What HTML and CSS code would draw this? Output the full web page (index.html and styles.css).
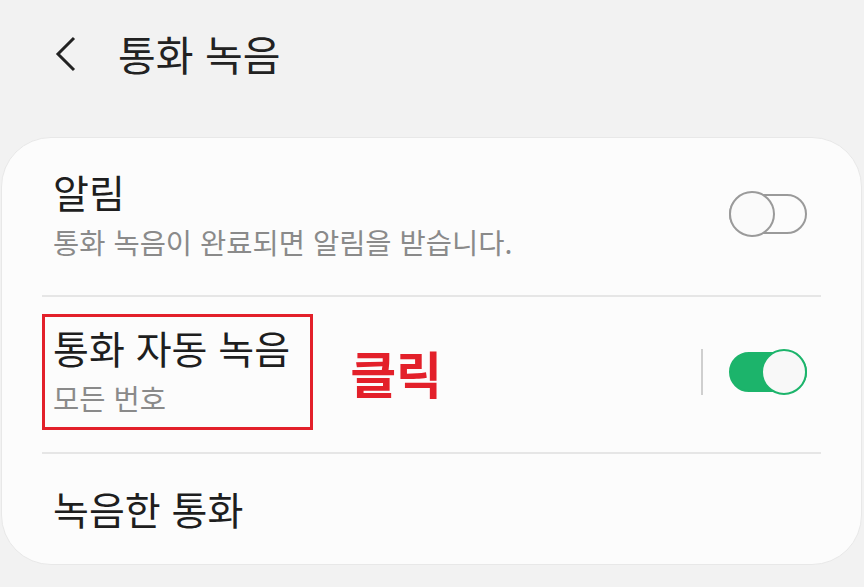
FILE: index.html
```html
<!DOCTYPE html>
<html lang="ko">
<head>
  <meta charset="UTF-8" />
  <meta name="viewport" content="width=device-width, initial-scale=1.0"/>
  <title>통화 녹음</title>
  <link rel="stylesheet" href="styles.css">
</head>
<body>
  <div class="header">
    <svg class="back" width="30" height="40" viewBox="0 0 30 40">
      <polyline points="22,4 6,20 22,36" fill="none" stroke="#222" stroke-width="3" />
    </svg>
    <h1>통화 녹음</h1>
  </div>

  <div class="card">
    <div class="row">
      <div class="text">
        <div class="title">알림</div>
        <div class="sub">통화 녹음이 완료되면 알림을 받습니다.</div>
      </div>
      <span class="switch"><span class="thumb"></span></span>
    </div>
    <div class="sep"></div>

    <div class="row mid">
      <div class="text marked">
        <div class="title">통화 자동 녹음</div>
        <div class="sub">모든 번호</div>
      </div>
      <span class="click">클릭</span>
      <span class="vbar"></span>
      <span class="switch on"><span class="thumb"></span></span>
    </div>
    <div class="sep"></div>

    <div class="row last">
      <div class="text">
        <div class="title">녹음한 통화</div>
      </div>
    </div>
  </div>
</body>
</html>
```

FILE: styles.css
```css
body {
  margin: 0;
  background: #f2f2f2;
  font-family: "Noto Sans CJK KR", "Noto Sans", sans-serif;
  color: #222;
}

.header {
  height: 137px;
  display: flex;
  align-items: center;
  padding-left: 52px;
  box-sizing: border-box;
  padding-bottom: 30px;
}

.back {
  display: block;
}

.header h1 {
  margin: 0 0 0 36px;
  font-size: 41px;
  font-weight: 400;
  line-height: 1;
}

.card {
  margin: 0 2px 0 1px;
  background: #fcfcfc;
  border-radius: 50px;
  border: 1px solid #e8e8e8;
  padding: 0 40px;
}

.row {
  display: flex;
  align-items: center;
  height: 157px;
  box-sizing: border-box;
  padding: 0 0 6px 11px;
}

.row.mid {
  height: 155px;
}

.row.last {
  height: 110px;
  padding-bottom: 2px;
}

.text {
  flex: 1;
}

.title {
  font-size: 39px;
  line-height: 48px;
  color: #1e1e1e;
}

.sub {
  margin-top: 8px;
  font-size: 28.5px;
  line-height: 38px;
  color: #8a8a8a;
}

.marked {
  flex: none;
  margin-left: -11px;
  padding: 6px 20px 10px 8px;
  border: 3px solid #e3202a;
}

.click {
  flex: 1;
  margin-left: 37px;
  font-size: 50px;
  font-weight: 700;
  color: #e3202a;
}

.sep {
  height: 2px;
  background: #e6e6e6;
}

.vbar {
  width: 2px;
  height: 46px;
  background: #cfcfcf;
  margin-right: 26px;
}

.switch {
  position: relative;
  width: 74px;
  height: 36px;
  border: 2px solid #9a9a9a;
  border-radius: 20px;
  margin-right: 14px;
}

.switch .thumb {
  position: absolute;
  left: -2px;
  top: -5px;
  width: 42px;
  height: 42px;
  border: 2px solid #9a9a9a;
  border-radius: 50%;
  background: #fafafa;
}

.switch.on {
  background: #1cb46b;
  border-color: #1cb46b;
}

.switch.on .thumb {
  left: auto;
  right: -2px;
  border-color: #1cb46b;
  background: #f8f8f8;
}
```
